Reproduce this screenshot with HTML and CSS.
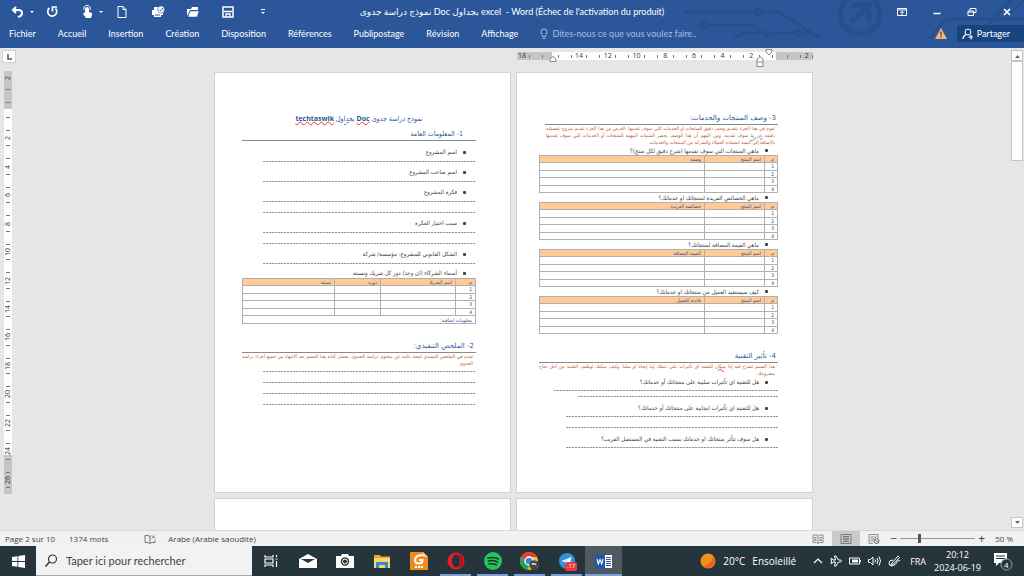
FILE: index.html
```
<!DOCTYPE html>
<html lang="fr">
<head>
<meta charset="utf-8">
<title>Word</title>
<link rel="stylesheet" href="styles.css">
</head>
<body>
<div class="app">
<header class="ribbon">
  <svg class="circuit" width="370" height="40" viewBox="0 0 370 40" fill="none" stroke="#264f8b" stroke-width="3">
    <path d="M0 11h101M109 11h12q6 0 10 4l28 23M25 25h70q5 0 8 3l14 10M23 38" stroke="none"/>
    <path d="M30 12h71M109 12h12q6 0 10 4l35 22M54 25h41q5 0 8 3l12 10M80 38q8-5 14-5h46M148 33h5q6 0 14 5"/>
    <circle cx="134" cy="12" r="0"/><circle cx="105" cy="12" r="3"/><circle cx="50" cy="25" r="3"/><circle cx="144" cy="33" r="3"/>
    <circle cx="206" cy="14" r="20" stroke-width="5"/>
    <path d="M197 5h18v17M214 6l-17 16" stroke-width="5"/>
    <path d="M276 38l14-17q2-2 5-2h75M334 24l24-24M352 18l18-18"/>
  </svg>
  <div class="titlebar">
    <div class="quick">
      <button aria-label="Annuler"><svg width="14" height="14" viewBox="0 0 14 14"><path d="M5 2L2 5l3 3M2 5h5q4 0 4 3t-4 4" fill="none" stroke="#fff" stroke-width="2"/><path d="M19 6h4l-2 2z" fill="#fff"/></svg></button>
      <button aria-label="Rétablir"><svg width="14" height="14" viewBox="0 0 14 14"><path d="M3.500 3a4.500 4.500 0 1 0 6 .5M6.500 6.500V2h4.500" fill="none" stroke="#fff" stroke-width="1.700"/></svg></button>
      <button aria-label="Mode tactile"><svg width="14" height="14" viewBox="0 0 14 14"><path d="M4 7V4a2 2 0 0 1 4 0v3l3 1v2l-1 3H5L2 9l1-1z" fill="#fff"/><path d="M3 5a3.300 3.300 0 1 1 6 0" fill="none" stroke="#fff"/><path d="M18 6h4l-2 2z" fill="#fff"/></svg></button>
      <button aria-label="Nouveau"><svg width="12" height="14" viewBox="0 0 12 14"><path d="M1 1.500h5l3 3v8H1zM6 1.500v3h3" fill="none" stroke="#fff"/></svg></button>
      <button aria-label="Aperçu et impression"><svg width="14" height="14" viewBox="0 0 14 14"><path d="M1 5h11v5h-2v2H3v-2H1zM3 2h5v3H3z" fill="#fff"/><circle cx="10" cy="4.500" r="3.500" fill="#fff" stroke="#2b579a" stroke-width=".6"/><path d="M8.300 4.500l1.400 1.400 2.300-3M4 10h5" fill="none" stroke="#2b579a"/></svg></button>
      <button aria-label="Ouvrir"><svg width="14" height="14" viewBox="0 0 14 14"><path d="M1 11V4h4l1-2h6v3H4z" fill="#fff"/><path d="M4 6h9l-2 6H2z" fill="#fff" stroke="#2b579a" stroke-width=".5"/></svg></button>
      <button aria-label="Enregistrer"><svg width="12" height="14" viewBox="0 0 12 14"><path d="M1 2h10v10H1z" fill="none" stroke="#fff" stroke-width="1.500"/><path d="M2 6.500h8M4 12V9h4v3" fill="none" stroke="#fff" stroke-width="1.300"/></svg></button>
      <button aria-label="Personnaliser"><svg width="8" height="14" viewBox="0 0 8 14"><path d="M2 4.500h4" stroke="#fff"/><path d="M2 7h4l-2 2z" fill="#fff"/></svg></button>
    </div>
    <h1 class="doc-name">نموذج دراسة جدوى Doc بجداول excel &nbsp;- Word (Échec de l'activation du produit)</h1>
    <div class="window">
      <button aria-label="Options du ruban"><svg width="10" height="10" viewBox="0 0 10 10"><path d="M.5 1.500h9v7h-9zM.5 3h9M5 8V4.500M3.300 6L5 4.300 6.700 6" fill="none" stroke="#fff"/></svg></button>
      <button aria-label="Réduire"><svg width="10" height="10" viewBox="0 0 10 10"><path d="M1.500 6.500h7" stroke="#fff" stroke-width="1.500"/></svg></button>
      <button aria-label="Restaurer"><svg width="10" height="10" viewBox="0 0 10 10"><path d="M3 3.500V1.500h6v4H7M1 4h5.500v4.500H1zM1 5h5" fill="none" stroke="#fff"/></svg></button>
      <button aria-label="Fermer"><svg width="10" height="10" viewBox="0 0 10 10"><path d="M2 2l6 6M8 2L2 8" stroke="#fff" stroke-width="1.700"/></svg></button>
    </div>
  </div>
  <nav class="tabs">
    <a href="#">Fichier</a><a href="#">Accueil</a><a href="#">Insertion</a><a href="#">Création</a><a href="#">Disposition</a><a href="#">Références</a><a href="#">Publipostage</a><a href="#">Révision</a><a href="#">Affichage</a>
    <a href="#" class="tell"><svg width="8" height="12" viewBox="0 0 8 12"><path d="M2.500 8.500V7.500Q1 6 1 4a3 3 0 0 1 6 0q0 2-1.500 3.500v1zM2.500 10.500h3" fill="none" stroke="#a9bddb"/></svg>Dites-nous ce que vous voulez faire..</a>
    <svg class="warn" width="12" height="11" viewBox="0 0 12 11"><path d="M6 0l6 11H0z" fill="#f0b67c"/><path d="M6 3.500v4M6 8.500v1.300" stroke="#3b3b3b" stroke-width="1.200"/></svg>
    <button class="share"><svg width="12" height="12" viewBox="0 0 12 12"><circle cx="6" cy="4" r="3" fill="none" stroke="#fff"/><path d="M1 11q0-3 3-4.500M6.500 9H11M9 7v4.500" fill="none" stroke="#fff" stroke-width="1.200"/></svg>Partager</button>
  </nav>
</header>

<main class="work">
  <div class="corner"><button class="tabstop" aria-label="Tabulation"><svg width="11" height="11" viewBox="0 0 11 11"><path d="M4 3v5h4" fill="none" stroke="#555" stroke-width="1.500"/></svg></button></div>
  <div class="hruler-row">
    <div class="hruler">
      <div class="cells">
        <i class="start-part"><b>18</b></i><i></i><i><b>14</b></i><i><b>12</b></i><i><b>10</b></i><i><b>8</b></i><i><b>6</b></i><i><b>4</b></i><i><b>2</b></i><i></i><i class="end-part"><b>2</b></i>
      </div>
      <svg class="mark mark-left" width="8" height="6" viewBox="0 0 8 6"><path d="M1 5.500V3l3-2.500L7 3v2.500z" fill="#fff" stroke="#888"/></svg>
      <svg class="mark mark-indent" width="8" height="11" viewBox="0 0 8 11"><path d="M1 6V3l3-2.500L7 3v7.500H1zM1 6h6" fill="#fff" stroke="#888"/></svg>
      <svg class="mark mark-first" width="8" height="7" viewBox="0 0 8 7"><path d="M1 .5h6V3L4 6 1 3z" fill="#fff" stroke="#888"/></svg>
    </div>
  </div>
  <div class="vruler-col">
    <div class="vruler">
      <i class="part"><b>2</b></i><i></i><i><b>2</b></i><i><b>4</b></i><i><b>6</b></i><i><b>8</b></i><i><b>10</b></i><i><b>12</b></i><i><b>14</b></i><i><b>16</b></i><i><b>18</b></i><i><b>20</b></i><i><b>22</b></i><i><b>24</b></i><i><b>26</b></i>
    </div>
  </div>
  <div class="pages">
    <article class="page first" dir="rtl" lang="ar">
      <h2 class="doc-title">نموذج دراسة جدوى <b><u class="red">Doc</u></b> <u class="blue">بجداول</u> <b><u class="red">techtaswik</u></b></h2>
      <h3 class="inset">1- المعلومات العامة</h3>
      <ul class="fields">
        <li><span>اسم المشروع</span><hr></li>
        <li><span>اسم صاحب المشروع</span><hr></li>
        <li><span>فكرة المشروع</span><hr><hr></li>
        <li><span>سبب اختيار الفكرة</span><hr><hr></li>
        <li><span>الشكل القانوني للمشروع: مؤسسة/ شركة</span><hr></li>
      </ul>
      <p class="caption">أسماء الشركاء (ان وجد) دور كل شريك ونسبته</p>
      <table class="partners">
        <thead><tr><th class="num">م.</th><th class="name">اسم الشريك</th><th class="role">دوره</th><th>نسبته</th></tr></thead>
        <tbody>
          <tr><td>1</td><td></td><td></td><td></td></tr>
          <tr><td>2</td><td></td><td></td><td></td></tr>
          <tr><td>3</td><td></td><td></td><td></td></tr>
          <tr><td>4</td><td></td><td></td><td></td></tr>
          <tr><td colspan="4">معلومات إضافية:</td></tr>
        </tbody>
      </table>
      <h3 class="next">2- الملخص التنفيذي:</h3>
      <p class="note">تقدم في الملخص التنفيذي لمحة عامة عن محتوى دراسة الجدوى. يفضل كتابة هذا القسم بعد الانتهاء من جميع اجزاء دراسة الجدوى.</p>
      <div class="blank"><hr><hr><hr><hr></div>
    </article>
    <article class="page second" dir="rtl" lang="ar">
      <h3 class="short">3- وصف المنتجات والخدمات:</h3>
      <p class="note short">تقوم في هذا الجزء بتقديم وصف دقيق للمنتجات او الخدمات التي سوف تقدمها. الغرض من هذا الجزء تقديم شروح تفصيلية دقيقة <u class="blue">عن ما</u> سوف تقدمه. ومن المهم أن هذا الوصف يحصر السمات المهمة للمنتجات أو الخدمات التي سوف تقدمها بالإضافة إلى كيفية استفادة العملاء والشركة من المنتجات والخدمات.</p>
      <p class="caption">ماهي المنتجات التي سوف تقدمها (شرح دقيق لكل منتج)؟</p>
      <table class="products">
        <thead><tr><th class="num">م.</th><th class="name">اسم المنتج</th><th>وصفه</th></tr></thead>
        <tbody><tr><td>1</td><td></td><td></td></tr><tr><td>2</td><td></td><td></td></tr><tr><td>3</td><td></td><td></td></tr><tr><td>4</td><td></td><td></td></tr></tbody>
      </table>
      <p class="caption">ماهي الخصائص الفريدة لمنتجاتك او خدماتك؟</p>
      <table class="products">
        <thead><tr><th class="num">م.</th><th class="name">اسم المنتج</th><th>خصائصه الفريدة</th></tr></thead>
        <tbody><tr><td>1</td><td></td><td></td></tr><tr><td>2</td><td></td><td></td></tr><tr><td>3</td><td></td><td></td></tr><tr><td>4</td><td></td><td></td></tr></tbody>
      </table>
      <p class="caption">ماهي القيمة المضافة لمنتجاتك؟</p>
      <table class="products">
        <thead><tr><th class="num">م.</th><th class="name">اسم المنتج</th><th>القيمة المضافة</th></tr></thead>
        <tbody><tr><td>1</td><td></td><td></td></tr><tr><td>2</td><td></td><td></td></tr><tr><td>3</td><td></td><td></td></tr><tr><td>4</td><td></td><td></td></tr></tbody>
      </table>
      <p class="caption">كيف سيستفيد العميل من منتجاتك او خدماتك؟</p>
      <table class="products">
        <thead><tr><th class="num">م.</th><th class="name">اسم المنتج</th><th>فائدته للعميل</th></tr></thead>
        <tbody><tr><td>1</td><td></td><td></td></tr><tr><td>2</td><td></td><td></td></tr><tr><td>3</td><td></td><td></td></tr><tr><td>4</td><td></td><td></td></tr></tbody>
      </table>
      <h3 class="next">4- تأثير التقنية</h3>
      <p class="note">هذا القسم تشرح فيه إذا <u class="red">يمكان</u> للتقنية اي تأثيرات على عملك إما إيجابا او سلبا. وكيف يمكنك توظيف التقنية من اجل نجاح مشروعك.</p>
      <ul class="fields compact">
        <li><span>هل للتقنية اي تأثيرات سلبية على منتجاتك أو خدماتك؟</span><hr class="long"><hr class="near"></li>
        <li><span>هل للتقنية اي تأثيرات ايجابية على منتجاتك أو خدماتك؟</span><hr><hr></li>
        <li><span>هل سوف تتأثر منتجاتك او خدماتك بسبب التقنية في المستقبل القريب؟</span><hr></li>
      </ul>
    </article>
    <article class="page"></article>
    <article class="page"></article>
  </div>
  <div class="scroll">
    <button aria-label="Haut"><svg width="7" height="4" viewBox="0 0 7 4"><path d="M1 4l2.500-3L6 4z" fill="#666"/></svg></button>
    <div class="track"><div class="thumb"></div></div>
    <button aria-label="Bas"><svg width="7" height="4" viewBox="0 0 7 4"><path d="M1 0l2.500 3L6 0z" fill="#666"/></svg></button>
  </div>
</main>

<footer class="status">
  <span class="s-page">Page 2 sur 10</span><span class="s-words">1374 mots</span>
  <svg class="s-proof" width="12" height="10" viewBox="0 0 12 10"><path d="M6 2v7M1 1.500h3l2 1 1-1M1 1.500v7h3l2 1 2-1h3V6M8 1.500l3 3M11 1.500l-3 3" fill="none" stroke="#777"/></svg>
  <span>Arabe (Arabie saoudite)</span>
  <div class="views">
    <button aria-label="Mode Lecture"><svg width="12" height="10" viewBox="0 0 12 10"><path d="M6 2v7.500M1 1h3.500L6 2l1.500-1H11v7.500H7.500L6 9.500 4.500 8.500H1zM2 3.500h2.500M2 5h2.500M2 6.500h2.500M7.500 3.500H10M7.500 5H10M7.500 6.500H10" fill="none" stroke="#777" stroke-width=".8"/></svg></button>
    <button class="on" aria-label="Page"><svg width="12" height="10" viewBox="0 0 12 10"><path d="M1 .5h10v9H1zM3 2.500h6M3 4.200h6M3 5.800h6M3 7.500h6" fill="none" stroke="#666" stroke-width=".8"/></svg></button>
    <button aria-label="Web"><svg width="12" height="10" viewBox="0 0 12 10"><path d="M10 4V.5H1v9h4M2.500 3h6M2.500 5H6M2.500 7H5" fill="none" stroke="#777" stroke-width=".8"/><circle cx="8.500" cy="7" r="2.500" fill="none" stroke="#666"/><path d="M7 6l3 2" stroke="#666"/></svg></button>
  </div>
  <div class="zoom"><button>−</button><input type="range" min="0" max="100" value="24" aria-label="Zoom"><button>+</button><span>50 %</span></div>
</footer>

<div class="taskbar">
  <button class="start" aria-label="Démarrer"><svg width="13" height="13" viewBox="0 0 13 13"><path d="M0 2l5.500-.8V6H0zM6.300 1L13 0v6H6.300zM0 7h5.500v4.800L0 11zM6.300 7H13v6l-6.700-1z" fill="#fff"/></svg></button>
  <label class="search"><svg width="14" height="14" viewBox="0 0 14 14"><circle cx="8.500" cy="5" r="4" fill="none" stroke="#333" stroke-width="1.200"/><path d="M5.500 8L1.500 12.500" stroke="#333" stroke-width="1.400"/></svg><input type="text" placeholder="Taper ici pour rechercher" aria-label="Rechercher"></label>
  <div class="apps">
    <button aria-label="Vue des tâches"><svg width="14" height="14" viewBox="0 0 14 14"><path d="M1 1v2h8V1M1 13v-2h8v2M1 5h8v4H1zM12.500 1v2M12.500 7v6M11.500 5h2" fill="none" stroke="#fff" stroke-width="1.200"/></svg></button>
    <button aria-label="Courrier"><svg width="18" height="16" viewBox="0 0 18 16"><path d="M0 6l9-5 9 5v9H0z" fill="#fff"/><path d="M2 6h14l-7 4z" fill="#26353c"/></svg></button>
    <button aria-label="Appareil photo"><svg width="18" height="16" viewBox="0 0 18 16"><path d="M0 3h5l1-2h6l1 2h5v12H0z" fill="#fff"/><circle cx="9" cy="8.500" r="4.200" fill="#26353c"/><circle cx="9" cy="8.500" r="2.500" fill="#26353c" stroke="#fff"/></svg></button>
    <button aria-label="Explorateur"><svg width="18" height="16" viewBox="0 0 18 16"><path d="M1 2h6l1 1.500h9V15H1z" fill="#e9a83a"/><path d="M1 5h16v10H1z" fill="#fbd36b"/><path d="M3 9h12v6h-3v-3H6v3H3z" fill="#2e8bd8"/></svg></button>
    <button aria-label="Lecteur PDF"><svg width="18" height="18" viewBox="0 0 18 18"><path d="M0 0h13l5 5v13H0z" fill="#f28a1f"/><path d="M13 0l5 5h-5z" fill="#fbd0a0"/><path d="M13 3Q5 3 5 8q0 3.500 4 3.500 3.500 0 3.500-3.500H9" fill="none" stroke="#fff" stroke-width="2"/><path d="M5 15h8" stroke="#fff" stroke-width="2" stroke-dasharray="2 1"/></svg></button>
    <button class="run" aria-label="Opera"><svg width="18" height="18" viewBox="0 0 18 18"><circle cx="9" cy="9" r="8.500" fill="#e0202c"/><ellipse cx="9" cy="9" rx="4" ry="6.500" fill="#26353c"/><path d="M12 3a9 8 0 0 1 0 12" fill="none" stroke="#a5121c" stroke-width="2"/></svg></button>
    <button class="run" aria-label="Spotify"><svg width="18" height="18" viewBox="0 0 18 18"><circle cx="9" cy="9" r="9" fill="#23c55e"/><path d="M4 6q6-1.500 10.500 1M4.500 9q5-1.500 9 1M5 12q4-1 7.500.8" fill="none" stroke="#18301f" stroke-width="1.500" stroke-linecap="round"/></svg></button>
    <button class="run" aria-label="Chrome"><svg width="19" height="18" viewBox="0 0 19 18"><circle cx="9" cy="9" r="9" fill="#f3c22c"/><path d="M1.200 4.500A9 9 0 0 1 17 5H9L6 11z" fill="#dd4033"/><path d="M1.200 4.500L6 11l3 2-1 5A9 9 0 0 1 1.200 4.500" fill="#27a050"/><circle cx="9" cy="9" r="4" fill="#3c81e8" stroke="#fff" stroke-width="1.300"/><circle cx="14" cy="13" r="4.800" fill="#555"/><path d="M11 11l2-1 2 1 2-1v3l-2 1-1-1-3 1zM12 16h4" fill="#ddd" stroke="#222"/></svg></button>
    <button class="run" aria-label="Telegram, 17 messages"><svg width="16" height="16" viewBox="0 0 16 16"><circle cx="8" cy="8" r="8" fill="#3291dc"/><path d="M2.500 8l10-4-2 9-3-2.500-1.500 1L6 9l4-3.500L5 9z" fill="#fff"/></svg><span class="badge">.17</span></button>
    <button class="run active" aria-label="Word"><svg width="18" height="17" viewBox="0 0 18 17"><path d="M9 2h8v13H9z" fill="#fff"/><path d="M11 4.500h5M11 6.500h5M11 8.500h5M11 10.500h5M11 12.500h5" stroke="#2b579a"/><path d="M0 2l10-2v17L0 15z" fill="#2456a5"/><path d="M2 6l1.300 5L5 6.500 6.700 11 8 6" fill="none" stroke="#fff" stroke-width="1.100"/></svg></button>
  </div>
  <button class="weather"><svg width="16" height="16" viewBox="0 0 16 16"><circle cx="8" cy="8" r="7.500" fill="#f29122"/><path d="M13.500 3A7.500 7.500 0 0 1 3 13.500Q11 12 13.500 3" fill="#e8611d"/></svg><span>20°C</span><span>Ensoleillé</span></button>
  <div class="tray">
    <svg width="10" height="8" viewBox="0 0 10 8"><path d="M1 6l4-4 4 4" fill="none" stroke="#fff" stroke-width="1.200"/></svg>
    <svg width="12" height="12" viewBox="0 0 12 12"><path d="M1 3.500h1L3 5h2.500L4.500 1H6l2.500 4h2q1 .3 1 1t-1 1h-2L6 11H4.500l1-4H3L2 8.500H1L1.500 6z" fill="none" stroke="#fff"/></svg>
    <svg width="12" height="8" viewBox="0 0 12 8"><path d="M.5 1h10v6H.5z" fill="none" stroke="#fff"/><path d="M3 2.500h6v3H3zM11 3h1v2h-1z" fill="#fff"/></svg>
    <svg width="13" height="12" viewBox="0 0 13 12"><path d="M.5 4.500H2.500L5 2v8L2.500 7.500H.5zM7 4.500q1 1.500 0 3M9 3q2 3 0 6M11 1.500q3 4.500 0 9" fill="none" stroke="#fff"/></svg>
    <svg width="13" height="12" viewBox="0 0 13 12"><path d="M4 8l6-7 1.500 1.500L5.500 9 3 10zM5 5Q1 5 1 8q0 3 3 3 4-1 5-4t3-1" fill="none" stroke="#fff"/></svg>
    <span class="lang">FRA</span>
    <time class="clock"><span>20:12</span><span>2024-06-19</span></time>
    <button class="notif" aria-label="Notifications"><svg width="20" height="20" viewBox="0 0 20 20"><path d="M1 2h13v10H6l-3 3v-3H1z" fill="#fff"/><path d="M3 5h9M3 7.500h9" stroke="#26353c"/><circle cx="13.500" cy="13.500" r="5.500" fill="#26353c" stroke="#9aa3a7"/></svg><span class="count">4</span></button>
  </div>
</div>
</div>
</body>
</html>
```
FILE: styles.css
```
* { box-sizing: border-box; }
body { margin: 0; font-family: "Open Sans", "Noto Sans", "DejaVu Sans", sans-serif; font-size: 9px; color: #444; }
button { border: 0; padding: 0; background: none; font: inherit; color: inherit; display: flex; align-items: center; justify-content: center; }
a { color: inherit; text-decoration: none; }
h1, h2, h3, p, ul { margin: 0; padding: 0; font-weight: 400; list-style: none; }
svg { flex: none; display: block; }
.app { height: 100vh; display: flex; flex-direction: column; overflow: hidden; }

.ribbon { position: relative; background: #2b579a; color: #fff; height: 48px; flex: none; font-family: Lato, "DejaVu Sans", sans-serif; }
.circuit { position: absolute; right: 0; top: 0; }
.titlebar { position: relative; display: grid; grid-template-columns: 1fr auto 1fr; align-items: center; height: 23px; }
.quick { display: flex; align-items: center; }
.quick button { width: 35px; }
.quick svg { overflow: visible; }
.doc-name { font-size: 9px; line-height: 14px; white-space: nowrap; }
.window { display: flex; justify-content: flex-end; gap: 25px; padding-right: 12px; }
.tabs { position: relative; display: flex; align-items: center; gap: 22px; height: 21px; padding-left: 9px; white-space: nowrap; }
.tell { display: flex; align-items: center; gap: 4px; color: #a9bddb; }
.warn { margin-left: auto; }
.share { background: #17437f; height: 17px; padding: 0 14px 0 5px; gap: 3px; margin-left: -12px; }

.work { flex: 1; min-height: 0; background: #e6e6e6; display: grid; grid-template-columns: 17px 1fr 13px; grid-template-rows: 24px 1fr; overflow: hidden; }
.corner { padding: 2px 0 0 2px; }
.tabstop { width: 14px; height: 13px; background: #fff; border: 1px solid #d0d0d0; }
.hruler-row { display: grid; grid-template-columns: 296px 296px; gap: 6px; justify-content: center; }
.hruler { grid-column: 2; position: relative; height: 8px; margin-top: 4px; background: linear-gradient(90deg, #c6c6c6 35px, #fff 35px 259px, #c6c6c6 259px); }
.cells { height: 8px; display: flex; }
.cells i { flex: 28 0 0; display: flex; align-items: center; justify-content: space-between; padding: 0 6px; font-style: normal; }
.cells .start-part { flex-grow: 20; padding-left: 1px; }
.cells .end-part { flex-grow: 21; padding-right: 0; }
.cells .start-part::before { display: none; }
.cells i::before, .cells i::after { content: ""; width: 1px; height: 3px; background: #777; }
.cells b, .vruler b { font-size: 7px; line-height: 8px; font-weight: 400; color: #333; }
.mark { position: absolute; }
.mark-left { left: 32px; top: 4px; }
.mark-indent { left: 239px; top: 4px; }
.mark-first { left: 248px; top: -3px; }
.vruler-col { padding-left: 4px; }
.vruler { width: 8px; height: 423px; margin-top: -1px; display: flex; flex-direction: column; background: linear-gradient(#c6c6c6 38px, #fff 38px 384px, #c6c6c6 384px); }
.vruler i { flex: 28 0 0; display: flex; flex-direction: column; align-items: center; justify-content: space-between; padding: 6px 0; font-style: normal; }
.vruler .part { flex-grow: 23; padding-top: 5px; }
.vruler .part::before { display: none; }
.vruler i::before, .vruler i::after { content: ""; width: 4px; height: 1px; background: #777; }
.vruler b { writing-mode: vertical-rl; transform: rotate(180deg); }

.pages { display: grid; grid-template-columns: 297px 297px; grid-auto-rows: 421px; gap: 5px; justify-content: center; overflow: hidden; min-height: 0; padding-right: 1px; }
.page { background: #fff; border: 1px solid #d2d2d2; padding: 40px 34px 0 27px; font-family: "DejaVu Sans Condensed", "DejaVu Sans", sans-serif; font-size: 6px; color: #444; }
.page.second { padding-left: 22px; }
.page h2, .page h3 { color: #2f5597; }
.doc-title { font-size: 7px; line-height: 12px; text-align: center; margin-bottom: 4px; }
.doc-title b { font-family: "Open Sans", sans-serif; }
.page h3 { font-family: "DejaVu Sans", sans-serif; font-size: 7px; line-height: 11px; padding-right: 2px; border-bottom: 1px solid #8a8a8a; white-space: nowrap; }
.page h3.short { margin-left: 6px; }
.page h3.inset { padding-right: 13px; font-family: "DejaVu Sans Condensed", sans-serif; }
.page h3.next { margin-top: 17px; }
.page u { text-decoration: underline wavy 1px; text-underline-offset: 0; }
.page .red { text-decoration-color: #e33; }
.page .blue { text-decoration-color: #2a8ae0; }
.fields { padding-top: 5px; }
.fields li { margin-bottom: 4px; }
.fields span, .caption { display: flex; align-items: center; gap: 6px; height: 12px; line-height: 12px; padding-right: 10px; white-space: nowrap; }
.fields span::before, .caption::before { content: ""; width: 3px; height: 3px; border-radius: 1px; background: #444; }
hr { margin: 0 0 0 21px; border: 0; height: 4px; background: repeating-linear-gradient(90deg, #999 0 2px, #ddd 2px 3px) bottom / 100% 1px no-repeat; }
hr + hr, .blank hr { height: 11px; }
.blank hr:first-child { height: 5px; }
.page .caption { height: 10px; line-height: 10px; }
.page.second .caption { height: 9px; line-height: 9px; }
.page table { width: 100%; border-collapse: collapse; table-layout: fixed; color: #2f5597; line-height: 6px; }
.partners { height: 46px; }
.products { height: 38px; }
.page th, .page td { border: 1px solid #b0b0b0; padding: 0 3px; text-align: right; font-size: 5px; font-weight: 400; height: 7px; }
.page th { background: #ffca95; }
.partners .num { width: 20px; }
.partners .name { width: 75px; }
.partners .role { width: 46px; }
.products .num { width: 13px; }
.products .name { width: 60px; }
.note { font-size: 5px; line-height: 7px; color: #c0603c; text-align: justify; padding-right: 3px; }
.note.short { padding-left: 7px; }
.compact { padding-top: 0; }
.compact li { margin-bottom: 6px; }
.compact span { height: 10px; line-height: 10px; }
.compact hr { margin-left: 27px; }
.compact .long { margin-left: 15px; }
.compact .near { margin-left: 39px; height: 6px; }

.scroll { grid-column: 3; grid-row: 1 / 3; display: flex; flex-direction: column; padding: 2px 1px 2px 0; }
.scroll button { height: 11px; background: #fff; border: 1px solid #c4c4c4; }
.track { flex: 1; background: #e6e6e6; }
.thumb { height: 22%; background: #fff; border: 1px solid #c4c4c4; }

.status { flex: none; height: 16px; background: #f1f1f1; border-top: 1px solid #d8d8d8; display: flex; align-items: center; padding: 0 11px 0 5px; font-size: 8px; white-space: nowrap; }
.s-words { margin-left: 14px; }
.s-proof { margin: 0 12px 0 36px; }
.views { display: flex; margin-left: auto; height: 100%; }
.views button { width: 28px; }
.views .on { background: #cacaca; }
.zoom { display: flex; align-items: center; gap: 3px; margin-left: 2px; }
.zoom button { font-size: 12px; line-height: 12px; }
.zoom span { margin-left: 7px; }
.zoom input { appearance: none; width: 75px; height: 10px; margin: 0; background: linear-gradient(#999, #999) center / 100% 1px no-repeat; }
.zoom input::-webkit-slider-thumb { appearance: none; width: 3px; height: 9px; background: #555; }

.taskbar { flex: none; height: 30px; background: #26353c; color: #fff; display: flex; align-items: stretch; }
.start { width: 36px; }
.search { width: 216px; background: #f2f2f2; display: flex; align-items: center; gap: 8px; padding-left: 8px; border-bottom: 1px solid #aaa; }
.search input { flex: 1; min-width: 0; border: 0; padding: 0; background: none; font: 11px Lato, sans-serif; }
.search input::placeholder { color: #444; opacity: 1; }
.apps { display: flex; }
.apps button { width: 37px; position: relative; }
.run::after { content: ""; position: absolute; left: 3px; right: 3px; bottom: 0; height: 2px; background: #7ba0d8; }
.apps .active { background: #50595e; }
.active::after { left: 0; right: 0; }
.badge { position: absolute; left: 17px; top: 16px; background: #e33b44; border-radius: 2px; font-size: 6px; line-height: 9px; padding: 0 2px; }
.weather { margin-left: auto; gap: 7px; font-size: 10px; }
.tray { display: flex; align-items: center; gap: 7px; margin-left: 17px; font-size: 9px; }
.lang { margin-left: 2px; }
.clock { display: flex; flex-direction: column; align-items: center; font-size: 9px; line-height: 13px; margin: 0 5px 0 1px; }
.notif { position: relative; margin-right: 11px; }
.count { position: absolute; left: 11px; top: 8px; font-size: 8px; line-height: 11px; }
```
